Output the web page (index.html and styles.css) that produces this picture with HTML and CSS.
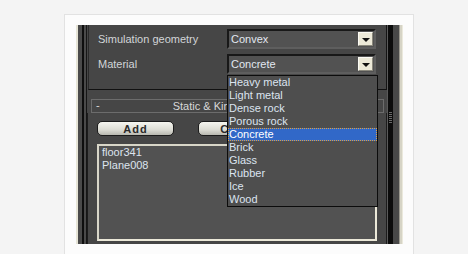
FILE: index.html
```html
<!DOCTYPE html>
<html lang="en">
<head>
    <meta charset="UTF-8">
    <title>Rigid body properties</title>
    <link rel="stylesheet" href="styles.css">
</head>
<body>
    <div class="card">
        <div class="shot">
            <div class="edge-left"></div>
            <div class="gutter"></div>

            <div class="main">
                <!-- Properties rollout (top cut off) -->
                <div class="rollout-top">
                    <div class="prop-row">
                        <span class="label">Simulation geometry</span>
                        <div class="combo">
                            <span class="combo-value">Convex</span>
                            <span class="combo-btn"><i class="tri"></i></span>
                        </div>
                    </div>
                    <div class="prop-row">
                        <span class="label">Material</span>
                        <div class="combo">
                            <span class="combo-value">Concrete</span>
                            <span class="combo-btn"><i class="tri"></i></span>
                            <ul class="droplist">
                                <li>Heavy metal</li>
                                <li>Light metal</li>
                                <li>Dense rock</li>
                                <li>Porous rock</li>
                                <li class="selected">Concrete</li>
                                <li>Brick</li>
                                <li>Glass</li>
                                <li>Rubber</li>
                                <li>Ice</li>
                                <li>Wood</li>
                            </ul>
                        </div>
                    </div>
                </div>

                <!-- Static & Kinematic Objects rollout -->
                <div class="rollout">
                    <div class="rollout-head">
                        <span class="toggle">-</span>
                        <span class="rollout-title">Static &amp; Kinematic Objects</span>
                    </div>
                    <div class="rollout-body">
                        <div class="buttons">
                            <button type="button" class="max-btn">Add</button>
                            <button type="button" class="max-btn">Clear</button>
                        </div>
                        <div class="listbox">
                            <div class="list-item">floor341</div>
                            <div class="list-item">Plane008</div>
                        </div>
                    </div>
                </div>
            </div>

            <div class="scroll"><div class="grip"></div></div>
            <div class="edge-right"></div>
        </div>
    </div>
</body>
</html>
```

FILE: styles.css
```css
* {
    margin: 0;
    padding: 0;
    box-sizing: border-box;
}

body {
    background-color: #f4f4f4;
    padding: 14px 0 0 64px;
    font-family: 'Liberation Sans', Arial, sans-serif;
    font-size: 11px;
}

.card {
    width: 350px;
    background-color: #fcfcfc;
    border: 1px solid #e2e2e2;
    border-bottom: none;
    padding: 10px 10px 10px 11px;
}

.shot {
    display: flex;
    width: 327px;
    height: 219px;
    background-color: #464646;
    overflow: hidden;
}

.edge-left {
    width: 2px;
    background-color: #e6e4d6;
}

.gutter {
    width: 9px;
    background: linear-gradient(to right,
        #4a4a4a 0 4px, #0e0e0e 4px 6px, #4a4a4a 6px 8px, #161616 8px 9px);
}

.main {
    width: 300px;
    display: flex;
    flex-direction: column;
}

/* top rollout */
.rollout-top {
    height: 65px;
    margin-left: 1px;
    border-left: 1px solid #2a2a2a;
    border-right: 1px solid #141414;
    border-bottom: 1px solid #111;
    padding: 4px 0 0 9px;
    display: flex;
    flex-direction: column;
    gap: 5px;
}

.prop-row {
    display: grid;
    grid-template-columns: 129px 149px;
    align-items: center;
    height: 20px;
}

.label {
    color: #d2d5d8;
}

.combo {
    position: relative;
    height: 20px;
    display: flex;
    align-items: center;
    justify-content: space-between;
    background-color: #525252;
    border: 2px solid;
    border-color: #181818 #5e5e5e #5e5e5e #181818;
    padding: 0 1px 0 1px;
}

.combo-value {
    color: #e2e8f0;
    padding-left: 1px;
}

.combo-btn {
    width: 15px;
    height: 14px;
    display: flex;
    align-items: center;
    justify-content: center;
    background-color: #ece9d8;
    border: 1px solid;
    border-color: #fbfaf4 #8a887c #8a887c #fbfaf4;
}

.tri {
    width: 0;
    height: 0;
    border-left: 4px solid transparent;
    border-right: 4px solid transparent;
    border-top: 4px solid #111;
    margin-top: 1px;
}

.droplist {
    position: absolute;
    top: 19px;
    left: -2px;
    width: 151px;
    list-style: none;
    background-color: #4e4e4e;
    border: 1px solid #0c0c0c;
    z-index: 5;
}

.droplist li {
    height: 13px;
    line-height: 13px;
    padding-left: 1px;
    color: #dce4f0;
}

.droplist li.selected {
    background-color: #3168c8;
    color: #fff;
    outline: 1px dotted #e0a040;
    outline-offset: -1px;
}

/* objects rollout */
.rollout {
    flex: 1;
    display: flex;
    flex-direction: column;
    margin-top: 9px;
}

.rollout-head {
    height: 14px;
    margin: 0 3px 0 4px;
    border: 1px solid #6c6c6c;
    display: flex;
    align-items: center;
    position: relative;
    color: #d8d8d8;
}

.toggle {
    position: absolute;
    left: 4px;
    top: -1px;
}

.rollout-title {
    flex: 1;
    text-align: center;
}

.rollout-body {
    flex: 1;
    border-left: 1px solid #1c1c1c;
    border-right: 1px solid #1c1c1c;
    padding: 8px 0 0 9px;
}

.buttons {
    display: flex;
    gap: 24px;
}

.max-btn {
    width: 77px;
    height: 15px;
    border: 1px solid #1c1c1c;
    border-radius: 5px;
    background: linear-gradient(#f6f6f0, #dcdcd4 60%, #b8b8b0);
    font-family: 'Liberation Sans', Arial, sans-serif;
    font-size: 11px;
    font-weight: bold;
    letter-spacing: 1px;
    color: #2a2a2a;
    line-height: 12px;
}

.listbox {
    width: 280px;
    height: 97px;
    margin-top: 8px;
    border: 2px solid #ebe8d8;
    border-top-color: #d8d6c8;
    border-left-color: #d8d6c8;
    background-color: #525252;
    padding-left: 3px;
}

.list-item {
    height: 13px;
    line-height: 13px;
    color: #dde4ee;
}

/* right scroll strip */
.scroll {
    position: relative;
    width: 12px;
    background: linear-gradient(to right,
        #5a5a5a 0 1px, #0c0c0c 1px 6px, #484848 6px);
}

.grip {
    position: absolute;
    left: 2px;
    top: 87px;
    width: 3px;
    height: 12px;
    background: repeating-linear-gradient(#6a6a6a 0 1px, transparent 1px 2px);
}

.edge-right {
    width: 4px;
    background: linear-gradient(to right, #9a988e 0 1px, #d6d4c6 1px 3px, #ebe9dc 3px);
}
```
